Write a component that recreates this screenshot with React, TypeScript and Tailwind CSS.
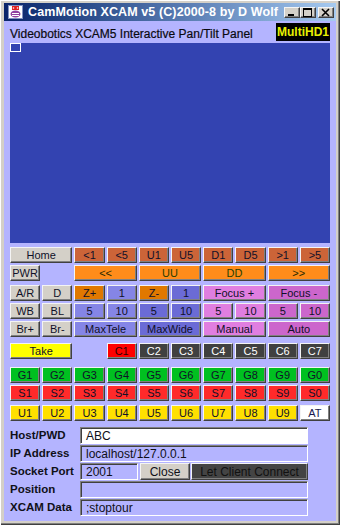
import React from "react";

const font = { fontFamily: '"Liberation Sans", Arial, sans-serif' };

const raised =
  "flex items-center justify-center h-full leading-none border border-t-[#f4f4f4] border-l-[#f4f4f4] border-b-[#404040] border-r-[#404040] shadow-[inset_-1px_-1px_0_#808080]";
const sunken =
  "h-full flex items-center pl-[5px] border border-t-[#808080] border-l-[#808080] border-b-white border-r-white shadow-[inset_1px_1px_0_#404040]";

type Cell = { t?: string; c?: string; s?: number; fg?: string };

const gray = "bg-[#d4d0c8]";
const brown = "bg-[#cc6438]";
const orange = "bg-[#ff8c1a]";
const zoom = "bg-[#e07800]";
const lb = "bg-[#8585e6]";
const db = "bg-[#6b6bd6]";
const pk = "bg-[#e07ee0]";
const mg = "bg-[#cc66cc]";

const rows: { mt: string; cells: Cell[] }[] = [
  {
    mt: "mt-[4px]",
    cells: [
      { t: "Home", c: gray, s: 2 },
      ...["<1", "<5", "U1", "U5", "D1", "D5", ">1", ">5"].map((t) => ({ t, c: brown })),
    ],
  },
  {
    mt: "mt-[2px]",
    cells: [
      { t: "PWR", c: gray },
      {},
      { t: "<<", c: orange, s: 2, fg: "text-[#2a2a00]" },
      { t: "UU", c: orange, s: 2, fg: "text-[#2a4000]" },
      { t: "DD", c: orange, s: 2, fg: "text-[#2a4000]" },
      { t: ">>", c: orange, s: 2, fg: "text-[#2a2a00]" },
    ],
  },
  {
    mt: "mt-[4px]",
    cells: [
      { t: "A/R", c: gray },
      { t: "D", c: gray },
      { t: "Z+", c: zoom },
      { t: "1", c: lb },
      { t: "Z-", c: zoom },
      { t: "1", c: db },
      { t: "Focus +", c: pk, s: 2 },
      { t: "Focus -", c: mg, s: 2 },
    ],
  },
  {
    mt: "mt-[2px]",
    cells: [
      { t: "WB", c: gray },
      { t: "BL", c: gray },
      { t: "5", c: lb },
      { t: "10", c: lb },
      { t: "5", c: db },
      { t: "10", c: db },
      { t: "5", c: pk },
      { t: "10", c: pk },
      { t: "5", c: mg },
      { t: "10", c: mg },
    ],
  },
  {
    mt: "mt-[2px]",
    cells: [
      { t: "Br+", c: gray },
      { t: "Br-", c: gray },
      { t: "MaxTele", c: lb, s: 2 },
      { t: "MaxWide", c: db, s: 2 },
      { t: "Manual", c: pk, s: 2 },
      { t: "Auto", c: mg, s: 2 },
    ],
  },
  {
    mt: "mt-[6px]",
    cells: [
      { t: "Take", c: "bg-[#ffff00]", s: 2 },
      {},
      { t: "C1", c: "bg-[#ff0000]", fg: "text-[#300000]" },
      ...["C2", "C3", "C4", "C5", "C6", "C7"].map((t) => ({ t, c: "bg-[#404040]", fg: "text-white" })),
    ],
  },
  {
    mt: "mt-[8px]",
    cells: ["G1", "G2", "G3", "G4", "G5", "G6", "G7", "G8", "G9", "G0"].map((t) => ({ t, c: "bg-[#00c020]" })),
  },
  {
    mt: "mt-[2px]",
    cells: ["S1", "S2", "S3", "S4", "S5", "S6", "S7", "S8", "S9", "S0"].map((t) => ({ t, c: "bg-[#ff2a2a]" })),
  },
  {
    mt: "mt-[4px]",
    cells: [
      ...["U1", "U2", "U3", "U4", "U5", "U6", "U7", "U8", "U9"].map((t) => ({ t, c: "bg-[#ffe000]" })),
      { t: "AT", c: "bg-white", fg: "text-[#1a1a50]" },
    ],
  },
];

const spans: Record<number, string> = { 1: "col-span-1", 2: "col-span-2" };

function TitleIcon() {
  return (
    <svg width="15" height="14" viewBox="0 0 15 14">
      <rect x="0.5" y="0.5" width="14" height="13" fill="#fff" stroke="#8090c0" />
      <rect x="4" y="1" width="7" height="4" fill="#e02020" />
      <circle cx="5.5" cy="3" r="0.8" fill="#fff" />
      <circle cx="9.5" cy="3" r="0.8" fill="#fff" />
      <ellipse cx="7.5" cy="9" rx="5" ry="3.5" fill="#9040a0" />
      <rect x="4" y="8" width="7" height="1" fill="#fff" />
      <rect x="4" y="10" width="7" height="1" fill="#fff" />
    </svg>
  );
}

function CapBtn({ kind }: { kind: "min" | "max" | "close" }) {
  return (
    <div className={`w-[16px] h-[14px] bg-[#d4d0c8] ${raised}`}>
      <svg width="10" height="9" viewBox="0 0 10 9">
        {kind === "min" && <rect x="1" y="6" width="6" height="2" fill="#000" />}
        {kind === "max" && (
          <>
            <rect x="0.5" y="0.5" width="8" height="8" fill="none" stroke="#000" />
            <rect x="0" y="0" width="9" height="2" fill="#000" />
          </>
        )}
        {kind === "close" && (
          <path d="M1 1 L8 8 M8 1 L1 8" stroke="#000" strokeWidth="1.6" />
        )}
      </svg>
    </div>
  );
}

function Field({ label, children }: { label: string; children: React.ReactNode }) {
  return (
    <div className="flex h-[17px] items-center">
      <div className="w-[70px] text-[11.5px] font-bold text-[#101018]">{label}</div>
      <div className="w-[228px] h-full flex">{children}</div>
    </div>
  );
}

export default function App() {
  return (
    <div
      className="w-[340px] h-[525px] bg-[#d4d0c8] pt-[3px] px-[4px] pb-[4px] flex flex-col shadow-[inset_1px_1px_0_#fff,inset_-1px_-1px_0_#404040,inset_-2px_-2px_0_#808080]"
      style={font}
    >
      {/* Title bar */}
      <div className="h-[18px] flex items-center bg-gradient-to-r from-[#0a246a] to-[#a6caf0] pl-[4px] pr-[2px]">
        <TitleIcon />
        <span className="ml-[5px] text-white font-bold text-[12.5px] tracking-[0.1px]">
          CamMotion XCAM v5 (C)2000-8 by D Wolf
        </span>
        <div className="ml-auto flex items-center">
          <CapBtn kind="min" />
          <CapBtn kind="max" />
          <div className="w-[2px]" />
          <CapBtn kind="close" />
        </div>
      </div>

      {/* Client area */}
      <div className="flex-1 bg-[#b4b4ff] px-[6px] flex flex-col">
        <div className="h-[22px] flex items-start">
          <span className="mt-[4px] text-[12px] text-[#0a0a10] [-webkit-text-stroke:0.2px_#0a0a10]">
            Videobotics XCAM5 Interactive Pan/Tilt Panel
          </span>
          <div className="ml-auto mt-[2px] h-[18px] w-[54px] bg-black flex items-center justify-center text-[#e8f000] font-bold text-[12px]">
            MultiHD1
          </div>
        </div>

        {/* Video area */}
        <div className="h-[200px] bg-[#3343b1]">
          <div className="w-[11px] h-[9px] border border-white" />
        </div>

        {/* Button grid */}
        {rows.map((r, i) => (
          <div key={i} className={`grid grid-cols-10 gap-x-[2px] h-[16px] ${r.mt}`}>
            {r.cells.map((c, j) =>
              c.t ? (
                <div
                  key={j}
                  className={`${spans[c.s ?? 1]} ${c.c} ${c.fg ?? "text-[#101028]"} text-[11px] ${raised}`}
                >
                  {c.t}
                </div>
              ) : (
                <div key={j} className={spans[c.s ?? 1]} />
              )
            )}
          </div>
        ))}

        {/* Connection form */}
        <div className="mt-[6px] flex flex-col gap-[1px] text-[12px] text-[#101018]">
          <Field label="Host/PWD">
            <div className={`${sunken} flex-1 bg-white`}>ABC</div>
          </Field>
          <Field label="IP Address">
            <div className={`${sunken} flex-1`}>localhost/127.0.0.1</div>
          </Field>
          <Field label="Socket Port">
            <div className={`${sunken} w-[58px]`}>2001</div>
            <div className={`ml-[2px] w-[50px] bg-[#d4d0c8] text-[12px] ${raised}`}>Close</div>
            <div className={`ml-[1px] flex-1 bg-[#444444] text-[12px] text-[#111] ${raised}`}>
              Let Client Connect
            </div>
          </Field>
          <Field label="Position">
            <div className={`${sunken} flex-1`} />
          </Field>
          <Field label="XCAM Data">
            <div className={`${sunken} flex-1`}>;stoptour</div>
          </Field>
        </div>
      </div>
    </div>
  );
}
